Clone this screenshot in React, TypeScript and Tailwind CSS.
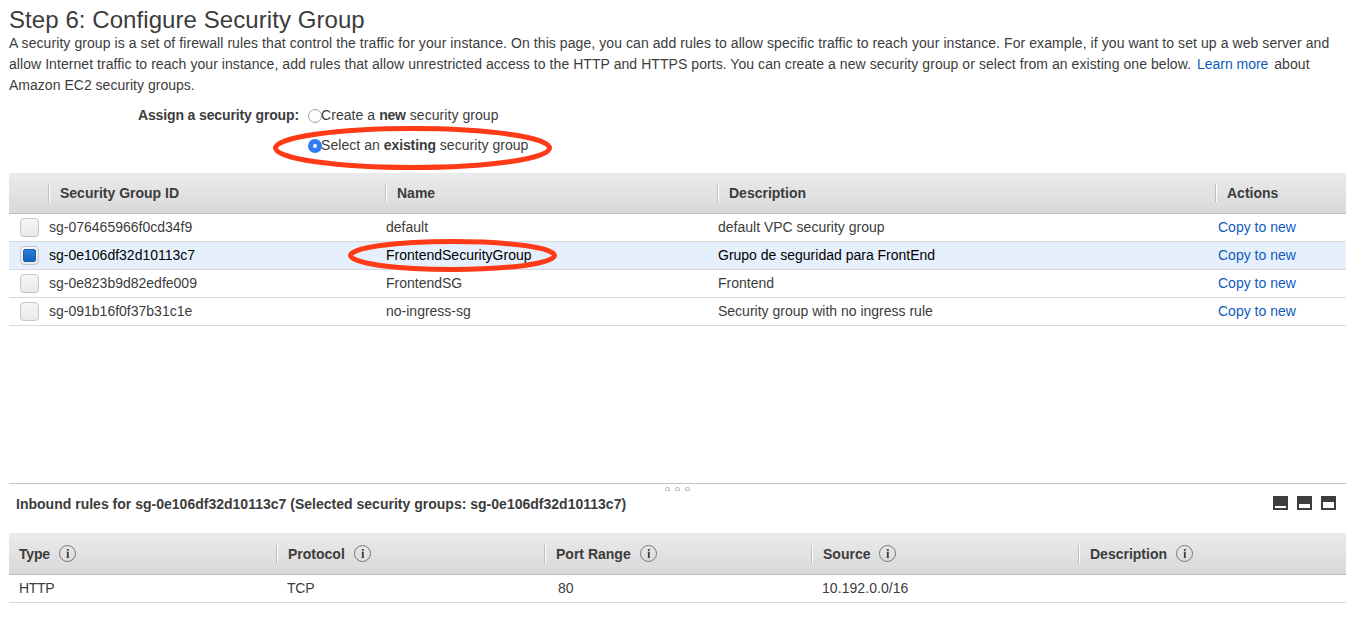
import React from "react";

const groups = [
  { id: "sg-076465966f0cd34f9", name: "default", description: "default VPC security group" },
  { id: "sg-0e106df32d10113c7", name: "FrontendSecurityGroup", description: "Grupo de seguridad para FrontEnd", selected: true },
  { id: "sg-0e823b9d82edfe009", name: "FrontendSG", description: "Frontend" },
  { id: "sg-091b16f0f37b31c1e", name: "no-ingress-sg", description: "Security group with no ingress rule" },
];

const ruleColumns = ["Type", "Protocol", "Port Range", "Source", "Description"];

function Separator() {
  return <span className="h-[18px] w-[2px] shrink-0 border-l border-[#bdbdbd] bg-white" />;
}

function HeaderCell({ children }: { children: React.ReactNode }) {
  return (
    <div className="flex items-center font-bold">
      <Separator />
      <span className="pl-[10px]">{children}</span>
    </div>
  );
}

function Ellipse({ className, w, h, stroke }: { className: string; w: number; h: number; stroke: number }) {
  return (
    <svg className={className} width={w} height={h} viewBox={`0 0 ${w} ${h}`} fill="none">
      <ellipse cx={w / 2} cy={h / 2} rx={(w - stroke) / 2} ry={(h - stroke) / 2} stroke="#ff3b17" strokeWidth={stroke} />
    </svg>
  );
}

function InfoIcon({ className }: { className: string }) {
  return (
    <svg className={`shrink-0 ${className}`} width="18" height="18" viewBox="0 0 18 18" fill="none">
      <circle cx="8.5" cy="8.5" r="8" stroke="#777" strokeWidth="1" />
      <path d="M7.9 4h1.8v1.7H7.9zM7.9 6.7h1.8V13H7.9z" fill="#3c3c3c" />
      <path d="M7.2 6.7h.8v.8h-.8zM7.2 12.2h3.2v.8H7.2z" fill="#3c3c3c" fillOpacity="0.35" />
    </svg>
  );
}

function PaneIcon({ y, h, x }: { y: number; h: number; x: number }) {
  return (
    <svg width="15" height="14" viewBox="0 0 15 14" shapeRendering="crispEdges">
      <rect width="15" height="14" fill="#3d3d3d" />
      <rect x={x} y={y} width="11" height={h} fill="#fff" />
    </svg>
  );
}

function Grip() {
  return (
    <svg width="5" height="4" viewBox="0 0 5 4" shapeRendering="crispEdges">
      <path d="M1 0h3v1H1zM0 1h1v2H0zM4 1h1v2H4zM0 3h5v1H0z" fill="#c3c3c3" />
      <path d="M1 1h1v1H1zM3 1h1v1H3z" fill="#dedede" />
    </svg>
  );
}

export default function App() {
  return (
    <main className="h-[627px] w-[1355px] overflow-hidden bg-white pl-[9px] pr-[9px] font-['Liberation_Sans',Arial,sans-serif] text-[14px] leading-[21px] text-[#3c3c3c]">
      <h1 className="h-[33px] whitespace-nowrap pt-[6px] text-[24px] leading-[27px] tracking-[0.07px]">Step 6: Configure Security Group</h1>
      <p className="h-[63px] whitespace-nowrap">
        <span className="tracking-[0.075px]">
          A security group is a set of firewall rules that control the traffic for your instance. On this page, you can add rules to allow specific traffic to reach your instance. For example, if you want to set up a web server and
        </span>
        <br />
        <span className="tracking-[0.06px]">
          allow Internet traffic to reach your instance, add rules that allow unrestricted access to the HTTP and HTTPS ports. You can create a new security group or select from an existing one below.{" "}
          <a className="mx-[2px] tracking-[-0.03px] text-[#0f5bbb]">Learn more</a> about
        </span>
        <br />
        <span className="tracking-[0.02px]">Amazon EC2 security groups.</span>
      </p>

      <section className="flex h-[77px] pt-[9px]">
        <div className="w-[290px] text-right font-bold tracking-[-0.13px]">Assign a security group:</div>
        <div className="ml-[9px] flex flex-col gap-[9px]">
          <label className="flex items-center">
            <span className="mt-[1px] size-[14px] rounded-full border border-[#a3a3a3] bg-white" />
            <span className="whitespace-pre -ml-px tracking-[0.06px]">Create a <b className="tracking-[-0.2px]">new</b> security group</span>
          </label>
          <label className="relative flex items-center">
            <span className="mt-[1px] flex size-[14px] items-center justify-center rounded-full bg-[#2f7cf6]">
              <span className="size-[4px] rounded-full bg-white" />
            </span>
            <span className="whitespace-pre -ml-px tracking-[0.05px]">Select an <b className="tracking-[-0.1px]">existing</b> security group</span>
            <Ellipse className="absolute -left-[35px] -top-[9px]" w={279} h={44} stroke={5} />
          </label>
        </div>
      </section>

      <section className="h-[310px]">
        <div className="grid h-[41px] grid-cols-[39px_337px_332px_498px_131px] border-b border-[#bcbcbc] bg-linear-to-b from-[#ebebeb] to-[#d9d9d9]">
          <div />
          <HeaderCell>Security Group ID</HeaderCell>
          <HeaderCell>Name</HeaderCell>
          <HeaderCell>Description</HeaderCell>
          <HeaderCell>Actions</HeaderCell>
        </div>
        {groups.map((g) => (
          <div
            key={g.id}
            className={`grid h-[28px] grid-cols-[40px_337px_332px_500px_128px] items-center border-b border-[#d9d9d9] ${g.selected ? "bg-[#e6f0fd] text-black" : ""}`}
          >
            <span className="ml-[11px] flex size-[19px] items-center justify-center rounded-[4px] border border-[#c5c5c5] bg-linear-to-b from-[#f6f6f6] to-[#e9e9e9]">
              {g.selected && <span className="size-[13px] rounded-[2px] border border-[#1562b8] bg-linear-to-b from-[#2b7cdb] to-[#1562b8]" />}
            </span>
            <span>{g.id}</span>
            <span className="relative">
              {g.name}
              {g.selected && <Ellipse className="absolute -left-[38px] -top-[6px]" w={209} h={33} stroke={5} />}
            </span>
            <span>{g.description}</span>
            <a className="text-[#0f5bbb]">Copy to new</a>
          </div>
        ))}
      </section>

      <section className="border-t border-[#c3c3c3]">
        <div className="flex h-[7px] justify-center gap-[5px] pt-[3px]">
          <Grip />
          <Grip />
          <Grip />
        </div>
        <div className="flex h-[42px] justify-between pl-[7px] pr-[10px] pt-[3px]">
          <h2 className="font-bold tracking-[0.01px]">Inbound rules for sg-0e106df32d10113c7 (Selected security groups: sg-0e106df32d10113c7)</h2>
          <div className="flex gap-[9px] pt-[2px]">
            <PaneIcon x={2} y={10} h={2} />
            <PaneIcon x={2} y={8} h={4} />
            <PaneIcon x={2} y={6} h={6} />
          </div>
        </div>
        <div className="grid h-[42px] grid-cols-[267px_268px_267px_267px_268px] border-b border-[#bcbcbc] bg-linear-to-b from-[#ebebeb] to-[#d9d9d9]">
          {ruleColumns.map((label, i) => (
            <div key={label} className={`flex items-center font-bold ${i === 0 ? "pl-[10px]" : ""}`}>
              {i > 0 && <Separator />}
              <span className={i > 0 ? "pt-px pl-[10px]" : "pt-px tracking-[-0.2px]"}>{label}</span>
              <InfoIcon className="ml-[9px]" />
            </div>
          ))}
        </div>
        <div className="grid h-[28px] grid-cols-[268px_271px_264px_534px] items-center border-b border-[#d9d9d9] pl-[10px]">
          <span className="tracking-[-0.3px]">HTTP</span>
          <span className="tracking-[-0.2px]">TCP</span>
          <span>80</span>
          <span className="tracking-[0.06px]">10.192.0.0/16</span>
        </div>
      </section>
    </main>
  );
}
